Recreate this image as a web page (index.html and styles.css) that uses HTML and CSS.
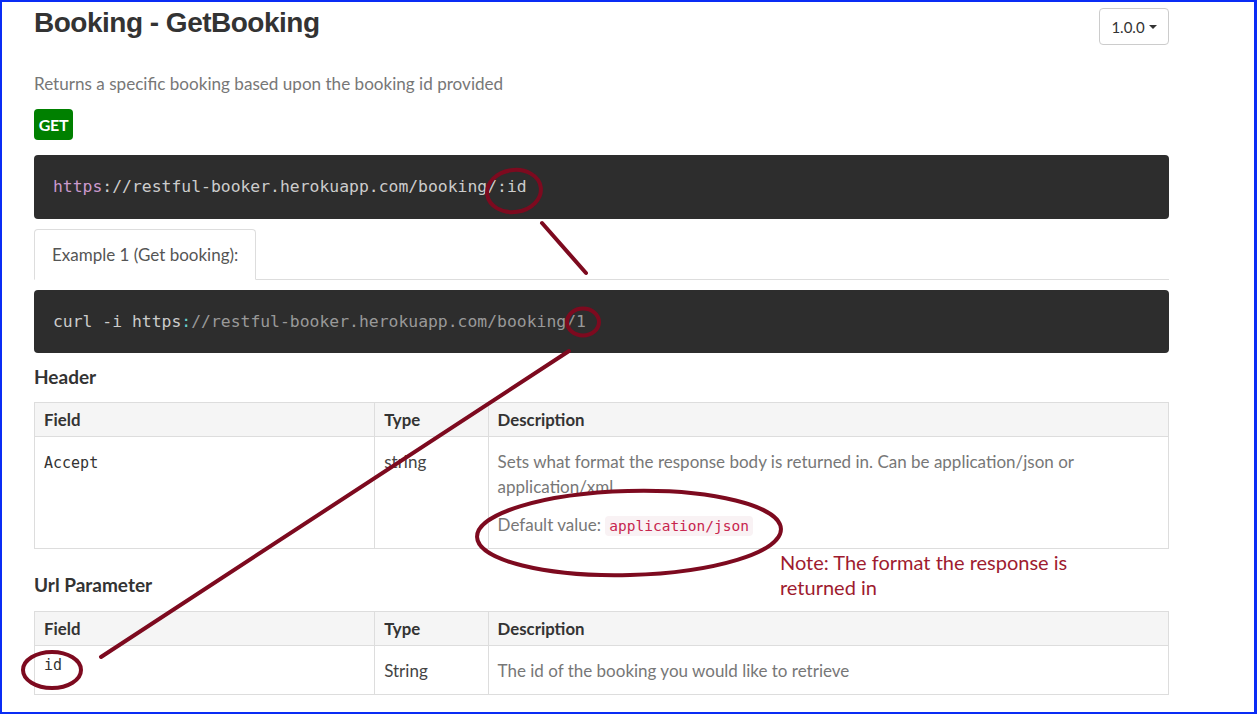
FILE: index.html
```html
<!DOCTYPE html>
<html lang="en">
<head>
<meta charset="utf-8">
<title>Booking - GetBooking</title>
<link rel="stylesheet" href="styles.css">
</head>
<body>
<div class="frame">
  <div class="page">
    <div class="title-row">
      <h1 class="title">Booking - GetBooking</h1>
      <button class="version" type="button">1.0.0 <span class="caret"></span></button>
    </div>
    <p class="desc">Returns a specific booking based upon the booking id provided</p>
    <div class="method-row"><span class="badge-get">GET</span></div>
    <pre class="code"><span class="tk-kw">https</span>://restful-booker.herokuapp.com/booking/:id</pre>
    <ul class="tabs"><li class="tab">Example 1 (Get booking):</li></ul>
    <pre class="code code-example">curl -i https<span class="tk-op">:</span><span class="tk-cm">//restful-booker.herokuapp.com/booking/1</span></pre>

    <h2 class="section">Header</h2>
    <table class="params">
      <colgroup><col class="c-field"><col class="c-type"><col class="c-desc"></colgroup>
      <thead>
        <tr><th>Field</th><th>Type</th><th>Description</th></tr>
      </thead>
      <tbody>
        <tr>
          <td><code class="field-code">Accept</code></td>
          <td>string</td>
          <td class="d">Sets what format the response body is returned in. Can be application/json or<br>application/xml
            <p class="default">Default value: <code class="val">application/json</code></p>
          </td>
        </tr>
      </tbody>
    </table>

    <h2 class="section section-url">Url Parameter</h2>
    <table class="params params-url">
      <colgroup><col class="c-field"><col class="c-type"><col class="c-desc"></colgroup>
      <thead>
        <tr><th>Field</th><th>Type</th><th>Description</th></tr>
      </thead>
      <tbody>
        <tr>
          <td class="f-id"><code class="field-code">id</code></td>
          <td>String</td>
          <td class="d">The id of the booking you would like to retrieve</td>
        </tr>
      </tbody>
    </table>
  </div>

  <div class="note">Note: The format the response is<br>returned in</div>
</div>

<svg class="annot" width="1257" height="714" viewBox="0 0 1257 714" xmlns="http://www.w3.org/2000/svg">
  <g fill="none" stroke="#7d0a1f" stroke-width="4" stroke-linecap="round">
    <ellipse cx="514" cy="191" rx="27" ry="21" transform="rotate(-8 514 191)"/>
    <line x1="542" y1="223" x2="586" y2="273"/>
    <ellipse cx="583" cy="322" rx="16" ry="13.5"/>
    <line x1="569" y1="351" x2="101" y2="657"/>
    <ellipse cx="629" cy="533" rx="152" ry="42" transform="rotate(-1.5 629 533)"/>
    <ellipse cx="52" cy="670" rx="29" ry="18"/>
  </g>
</svg>
</body>
</html>
```

FILE: styles.css
```css
html, body {
  margin: 0;
  padding: 0;
  background: #fff;
}

body {
  font-family: Lato, "Noto Sans", sans-serif;
  color: #333;
  position: relative;
}

.frame {
  position: relative;
  width: 1257px;
  height: 714px;
  box-sizing: border-box;
  border: 2px solid #0a2cf5;
  border-right-width: 3px;
  overflow: hidden;
}

.page {
  padding: 0 85px 0 32px;
}

.title-row {
  display: flex;
  justify-content: space-between;
  align-items: flex-start;
}

.title {
  margin: 4px 0 0;
  font: bold 28px/33px "Liberation Sans", Arial, sans-serif;
  letter-spacing: -0.5px;
  color: #333;
}

.version {
  margin-top: 6px;
  width: 70px;
  height: 37px;
  padding: 0;
  border: 1px solid #ccc;
  border-radius: 4px;
  background: #fff;
  color: #333;
  font: 15px Lato, sans-serif;
  display: flex;
  align-items: center;
  justify-content: center;
  gap: 4px;
}

.caret {
  width: 0;
  height: 0;
  border-top: 4px solid #333;
  border-left: 4px solid transparent;
  border-right: 4px solid transparent;
}

.desc {
  margin: 28px 0 0;
  font-size: 17.1px;
  line-height: 22px;
  color: #777;
}

.method-row {
  display: flex;
  margin-top: 14px;
}

.badge-get {
  width: 39px;
  height: 31px;
  border-radius: 4px;
  background: #008000;
  color: #fff;
  font: bold 16px/31px Lato, sans-serif;
  letter-spacing: -0.3px;
  text-align: center;
}

.code {
  margin: 15px 0 0;
  padding: 20px 19px;
  background: #2d2d2d;
  color: #ccc;
  border-radius: 4px;
  font: 16.4px/24px "DejaVu Sans Mono", "Liberation Mono", monospace;
  white-space: pre;
}

.code-example {
  margin-top: 10px;
  padding: 20px 19px 19px;
}

.tk-kw { color: #cc99cd; }
.tk-op { color: #67cdcc; }
.tk-cm { color: #999; }

.tabs {
  list-style: none;
  margin: 10px 0 0;
  padding: 0;
  display: flex;
  border-bottom: 1px solid #ddd;
}

.tab {
  margin-bottom: -1px;
  padding: 0 17px;
  line-height: 49px;
  border: 1px solid #ddd;
  border-bottom-color: #fff;
  border-radius: 4px 4px 0 0;
  background: #fff;
  font-size: 17px;
  color: #555;
}

.section {
  margin: 12px 0 0;
  font: bold 19px/24px Lato, sans-serif;
  color: #333;
}

.section-url {
  margin-top: 24px;
}

.params {
  margin-top: 13px;
  width: 100%;
  border-collapse: collapse;
  table-layout: fixed;
  font-size: 17px;
}

.params-url {
  margin-top: 14px;
}

.c-field { width: 30%; }
.c-type { width: 10%; }
.c-desc { width: 60%; }

.params th {
  background: #f5f5f5;
  text-align: left;
  padding: 8px 9px;
  line-height: 17px;
  font-size: 16.8px;
  font-weight: bold;
  color: #333;
  border: 1px solid #ddd;
}

.params td {
  padding: 12px 9px 11px;
  line-height: 25px;
  vertical-align: top;
  border: 1px solid #ddd;
  color: #444;
}

.params td.d {
  color: #777;
}

.params-url td {
  padding-top: 12px;
  padding-bottom: 11px;
}

.params-url td.f-id {
  padding-top: 5px;
}

.field-code {
  font: 15px "DejaVu Sans Mono", "Liberation Mono", monospace;
  color: #333;
}

.default {
  margin: 13px 0 0;
}

.val {
  font: 14.5px "DejaVu Sans Mono", "Liberation Mono", monospace;
  color: #c7254e;
  background: #f9f2f4;
  padding: 2px 4px;
  border-radius: 4px;
}

.note {
  position: absolute;
  left: 778px;
  top: 548px;
  font: 20px/25px Lato, sans-serif;
  color: #9e1b2f;
}

.annot {
  position: absolute;
  left: 0;
  top: 0;
  pointer-events: none;
}
```
